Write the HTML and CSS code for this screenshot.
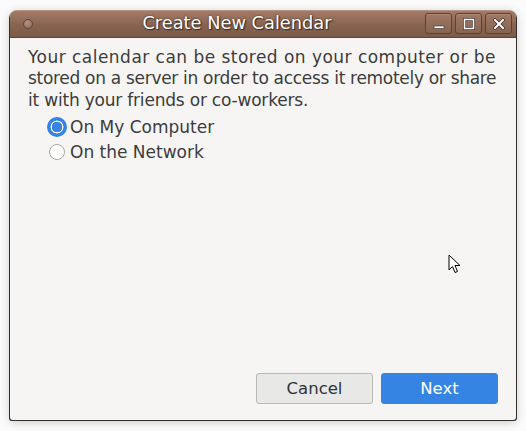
FILE: index.html
```html
<!DOCTYPE html>
<html>
<head>
<meta charset="utf-8">
<link rel="stylesheet" href="styles.css">
</head>
<body>
<div class="window">
  <div class="titlebar">
    <span class="menu-dot"></span>
    <div class="title">Create New Calendar</div>
    <div class="controls">
      <div class="ctl"><svg width="12" height="12" viewBox="0 0 12 12"><rect x="1" y="8" width="10" height="2.5" fill="#fff" stroke="#3a2a22" stroke-width="0.6"/></svg></div>
      <div class="ctl"><svg width="12" height="12" viewBox="0 0 12 12"><rect x="1.5" y="1.5" width="9" height="9" fill="none" stroke="#3a2a22" stroke-width="3"/><rect x="1.5" y="1.5" width="9" height="9" fill="none" stroke="#fff" stroke-width="1.6"/></svg></div>
      <div class="ctl"><svg width="12" height="12" viewBox="0 0 12 12"><path d="M2 2 L10 10 M10 2 L2 10" stroke="#3a2a22" stroke-width="3.4" stroke-linecap="square"/><path d="M2 2 L10 10 M10 2 L2 10" stroke="#fff" stroke-width="2" stroke-linecap="square"/></svg></div>
    </div>
  </div>
  <div class="content">
    <p class="desc"><span class="line l1">Your calendar can be stored on your computer or be</span> <span class="line l2">stored on a server in order to access it remotely or share</span> <span class="line l3">it with your friends or co-workers.</span></p>
    <div class="options">
      <label class="opt"><span class="radio checked"></span>On My Computer</label>
      <label class="opt"><span class="radio"></span>On the Network</label>
    </div>
    <div class="spacer"></div>
    <div class="buttons">
      <button class="btn cancel">Cancel</button>
      <button class="btn next">Next</button>
    </div>
  </div>
</div>
<svg class="cursor" width="14" height="22" viewBox="0 0 14 22"><path d="M1 1 L1 16 L4.5 12.5 L7 18.5 L9.5 17.5 L7 11.5 L12 11.5 Z" fill="#fff" stroke="#000" stroke-width="1"/></svg>
</body>
</html>
```
FILE: styles.css
```css
html, body {
  margin: 0;
  padding: 0;
  background: #fbfbfb;
  width: 526px;
  height: 431px;
  overflow: hidden;
  font-family: "DejaVu Sans", sans-serif;
}
body {
  padding: 10px 10px 11px 10px;
  box-sizing: border-box;
  position: relative;
}
.window {
  width: 506px;
  height: 410px;
  display: flex;
  flex-direction: column;
  background: #f6f5f4;
  border-radius: 7px 7px 3px 3px;
  box-shadow: 0 2px 10px rgba(0,0,0,0.22), 1px 1px 0 #3c3633, -1px 1px 0 #3c3633;
  overflow: hidden;
}
.titlebar {
  height: 27px;
  flex: none;
  display: flex;
  align-items: center;
  position: relative;
  background: linear-gradient(#a57c69, #86634f 60%, #7b5a48);
  border-bottom: 1px solid #5d4438;
  box-shadow: inset 0 1px 0 rgba(255,255,255,0.2);
}
.menu-dot {
  width: 8px;
  height: 8px;
  border-radius: 50%;
  border: 1px solid #5e463a;
  background: radial-gradient(circle at 40% 35%, #b09080, #8c6b5a);
  margin-left: 13px;
}
.title {
  position: absolute;
  left: 0;
  top: 0;
  bottom: 0;
  width: 454px;
  text-align: center;
  line-height: 26px;
  color: #fff;
  font-size: 17.8px;
  text-shadow: 1px 1px 1px #3a2a22, 0 0 2px #3a2a22;
}
.controls {
  margin-left: auto;
  margin-right: 4px;
  display: flex;
  gap: 3px;
}
.ctl {
  width: 27px;
  height: 21px;
  border: 1px solid #5a4237;
  border-radius: 3px;
  background: linear-gradient(#a07866, #876452);
  box-shadow: inset 0 1px 0 rgba(255,255,255,0.15);
  display: flex;
  align-items: center;
  justify-content: center;
  box-sizing: border-box;
}
.content {
  flex: 1;
  display: flex;
  flex-direction: column;
  padding: 9px 8px 16px 18px;
}
.desc {
  margin: 0;
  font-size: 17px;
  line-height: 21.3px;
  color: #3c3c3c;
}
.line {
  display: block;
  white-space: nowrap;
}
.l1 { letter-spacing: 0.47px; }
.l2 { letter-spacing: -0.3px; }
.l3 { letter-spacing: -0.2px; }
.options {
  margin-left: 21px;
  margin-top: 4px;
  display: flex;
  flex-direction: column;
}
.opt {
  display: flex;
  align-items: center;
  font-size: 17px;
  height: 25px;
  color: #3c3c3c;
}
.radio {
  width: 16px;
  height: 16px;
  border-radius: 50%;
  border: 1px solid #a8a8a6;
  background: #fff;
  box-sizing: border-box;
  margin-right: 5px;
  margin-left: 0;
}
.radio.checked {
  width: 20px;
  height: 20px;
  margin-left: -2px;
  margin-right: 3px;
  border: 2px solid #3584e4;
  background: radial-gradient(circle, #3584e4 0 5px, #fff 5.5px 6.2px, #3584e4 6.7px);
}
.spacer { flex: 1; }
.buttons {
  display: flex;
  justify-content: flex-end;
  gap: 8px;
  margin-right: 10px;
}
.btn {
  width: 117px;
  height: 31px;
  border-radius: 3px;
  font-family: "DejaVu Sans", sans-serif;
  font-size: 16.5px;
  padding: 0;
}
.cancel {
  background: #e8e8e7;
  border: 1px solid #b8b8b5;
  color: #2e3436;
}
.next {
  background: #3584e4;
  border: 1px solid #3584e4;
  color: #fff;
}
.cursor {
  position: absolute;
  left: 448px;
  top: 254px;
}
```
